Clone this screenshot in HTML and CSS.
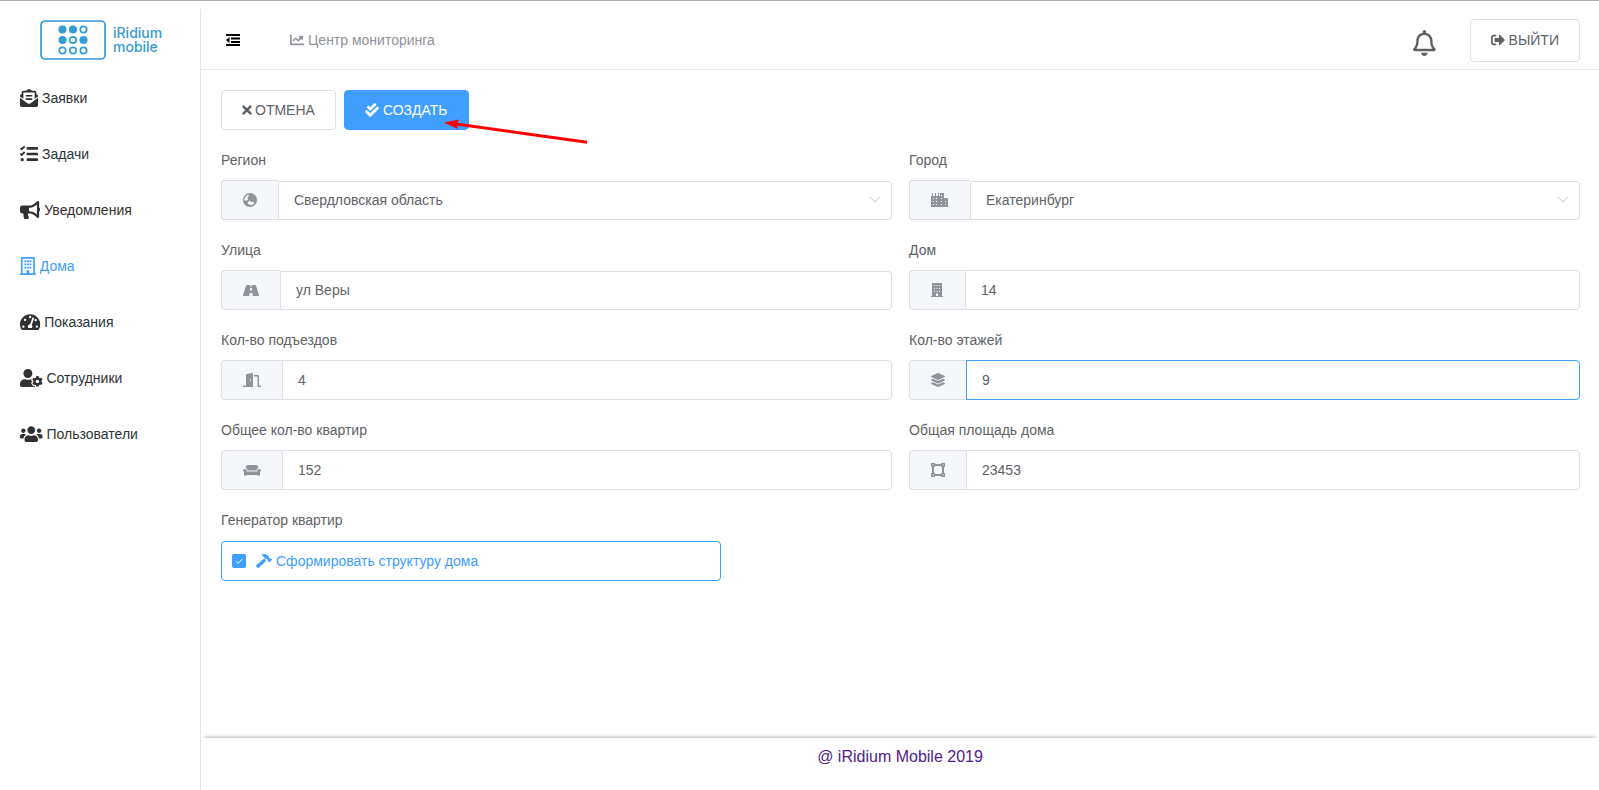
FILE: index.html
```html
<!DOCTYPE html>
<html lang="ru">
<head>
<meta charset="utf-8">
<title>iRidium mobile</title>
<link rel="stylesheet" href="styles.css">
</head>
<body class="page">
<aside class="sidebar">
  <a class="logo" href="#">
    <svg class="logo-mark" viewBox="0 0 66 40" aria-hidden="true">
      <rect class="logo-frame" x="1" y="1" width="64" height="38" rx="4"/>
      <g class="logo-dots">
        <circle class="dot-full" cx="22.500" cy="9.500" r="3.200"/><circle class="dot-full" cx="33" cy="9.500" r="3.200"/><circle cx="43.500" cy="9.500" r="3.200"/>
        <circle class="dot-full" cx="22.500" cy="20" r="3.200"/><circle cx="33" cy="20" r="3.200"/><circle class="dot-full" cx="43.500" cy="20" r="3.200"/>
        <circle cx="22.500" cy="30.500" r="3.200"/><circle cx="33" cy="30.500" r="3.200"/><circle cx="43.500" cy="30.500" r="3.200"/>
      </g>
    </svg>
    <span class="logo-text">iRidium<br>mobile</span>
  </a>
  <nav class="menu">
    <a class="menu-item" href="#"><svg viewBox="0 0 512 512"><path d="M176 216h160c8.840 0 16-7.160 16-16v-16c0-8.840-7.160-16-16-16H176c-8.840 0-16 7.160-16 16v16c0 8.840 7.160 16 16 16zm-16 80c0 8.840 7.160 16 16 16h160c8.840 0 16-7.160 16-16v-16c0-8.840-7.160-16-16-16H176c-8.840 0-16 7.160-16 16v16zm96 121.130c-16.420 0-32.840-5.060-46.860-15.190L0 250.860V464c0 26.510 21.490 48 48 48h416c26.510 0 48-21.490 48-48V250.860L302.860 401.940c-14.020 10.120-30.440 15.190-46.860 15.190zm237.610-254.180c-8.850-6.940-17.240-13.470-29.610-22.810V96c0-26.510-21.490-48-48-48h-77.550c-3.040-2.200-5.870-4.260-9.040-6.560C312.600 29.170 279.200-.35 256 0c-23.200-.35-56.590 29.170-73.410 41.440-3.170 2.300-6 4.360-9.040 6.560H96c-26.510 0-48 21.490-48 48v44.140c-12.370 9.330-20.760 15.870-29.610 22.810A47.995 47.995 0 0 0 0 200.720v10.650l96 69.350V96h320v184.720l96-69.350v-10.650c0-14.740-6.780-28.670-18.390-37.770z"/></svg><span>Заявки</span></a>
    <a class="menu-item" href="#"><svg viewBox="0 0 512 512"><rect x="190" y="58" width="322" height="76" rx="18"/><rect x="190" y="218" width="322" height="76" rx="18"/><rect x="190" y="378" width="322" height="76" rx="18"/><circle cx="64" cy="416" r="46"/><path class="tick" d="M14 86l36 34 82-84M14 248l36 34 82-84"/></svg><span>Задачи</span></a>
    <a class="menu-item" href="#"><svg viewBox="0 0 576 512"><path d="M576 240c0-23.630-12.950-44.040-32-55.120V32.010C544 23.260 537.020 0 512 0c-7.120 0-14.190 2.380-19.980 7.020l-85.030 68.030C364.280 109.190 310.660 128 256 128H64c-35.350 0-64 28.650-64 64v96c0 35.350 28.650 64 64 64h33.700c-1.390 10.480-2.180 21.140-2.180 32 0 39.770 9.260 77.350 25.560 110.940 5.190 10.690 16.520 17.060 28.400 17.060h74.280c26.050 0 41.690-29.840 25.900-50.560-16.400-21.520-26.150-48.360-26.150-77.440 0-11.110 1.620-21.790 4.410-32H256c54.660 0 108.280 18.810 150.980 52.950l85.030 68.030a32.023 32.023 0 0 0 19.980 7.020c24.920 0 32-22.780 32-32V295.130C563.050 284.040 576 263.630 576 240zm-96 141.420l-33.050-26.440C392.950 311.780 325.120 288 256 288v-96c69.120 0 136.950-23.780 190.950-66.980L480 98.580v282.840z"/></svg><span>Уведомления</span></a>
    <a class="menu-item menu-item--active" href="#"><svg viewBox="0 0 448 512"><path fill-rule="evenodd" d="M24 24c0-13 11-24 24-24h352c13 0 24 11 24 24v440h12c7 0 12 5 12 12v36H0v-36c0-7 5-12 12-12h12zM72 48v415h112v-75c0-7 5-12 12-12h56c7 0 12 5 12 12v75h112V48zM126 92h54v54h-54zM268 92h54v54h-54zM197 92h54v54h-54zM126 184h54v54h-54zM268 184h54v54h-54zM197 184h54v54h-54zM126 276h54v54h-54zM268 276h54v54h-54zM197 276h54v54h-54z"/></svg><span>Дома</span></a>
    <a class="menu-item" href="#"><svg viewBox="0 0 576 512"><path fill-rule="evenodd" d="M288 32C129 32 0 161 0 320c0 53 14 102 39 145 6 10 16 15 27 15h444c11 0 21-5 27-15 25-43 39-92 39-145C576 161 447 32 288 32zM288 80a34 34 0 1 1 0 68 34 34 0 0 1 0-68zM96 352a34 34 0 1 1 0 68 34 34 0 0 1 0-68zM144 160a34 34 0 1 1 0 68 34 34 0 0 1 0-68zM480 352a34 34 0 1 1 0 68 34 34 0 0 1 0-68zM448 168a34 34 0 1 1 0 68 34 34 0 0 1 0-68zM356 126l46 15-67 200c12 12 17 27 17 43 0 18-5 30-14 40H238c-9-10-14-24-14-40 0-34 28-62 64-64z"/></svg><span>Показания</span></a>
    <a class="menu-item" href="#"><svg viewBox="0 0 640 512"><path d="M610.500 373.300c2.600-14.100 2.600-28.500 0-42.600l25.800-14.900c3-1.700 4.300-5.200 3.300-8.500-6.700-21.600-18.200-41.200-33.200-57.400-2.300-2.500-6-3.100-9-1.400l-25.800 14.900c-10.900-9.300-23.400-16.500-36.900-21.300v-29.800c0-3.400-2.400-6.400-5.700-7.100-22.300-5-45-4.800-66.200 0-3.300.7-5.700 3.700-5.700 7.100v29.800c-13.500 4.800-26 12-36.900 21.300l-25.800-14.900c-2.900-1.700-6.700-1.100-9 1.400-15 16.200-26.500 35.800-33.200 57.400-1 3.300.4 6.800 3.300 8.500l25.800 14.900c-2.600 14.100-2.600 28.500 0 42.600l-25.800 14.900c-3 1.700-4.300 5.200-3.300 8.500 6.700 21.600 18.200 41.100 33.200 57.400 2.300 2.500 6 3.100 9 1.400l25.800-14.900c10.900 9.300 23.400 16.500 36.900 21.300v29.800c0 3.400 2.400 6.400 5.700 7.100 22.300 5 45 4.800 66.200 0 3.300-.7 5.700-3.700 5.700-7.100v-29.800c13.500-4.800 26-12 36.900-21.300l25.800 14.900c2.900 1.700 6.700 1.100 9-1.400 15-16.200 26.500-35.800 33.200-57.400 1-3.300-.4-6.800-3.300-8.500l-25.800-14.900zM496 400.500c-26.800 0-48.500-21.800-48.500-48.500s21.800-48.500 48.500-48.500 48.500 21.800 48.500 48.500-21.700 48.500-48.500 48.500zM224 256c70.700 0 128-57.300 128-128S294.700 0 224 0 96 57.300 96 128s57.300 128 128 128zm201.200 226.500c-2.300-1.200-4.600-2.600-6.800-3.900l-7.900 4.600c-6 3.400-12.800 5.300-19.600 5.300-10.900 0-21.400-4.600-28.900-12.600-18.300-19.800-32.300-43.900-40.200-69.600-5.500-17.700 1.900-36.400 17.900-45.700l7.900-4.600c-.1-2.600-.1-5.200 0-7.800l-7.900-4.600c-16-9.200-23.400-28-17.900-45.700.9-2.900 2.200-5.800 3.200-8.700-3.800-.3-7.500-1.200-11.400-1.200h-16.700c-22.200 10.200-46.900 16-72.900 16s-50.600-5.800-72.900-16h-16.700C60.200 288 0 348.200 0 422.400V464c0 26.500 21.500 48 48 48h352c10.100 0 19.500-3.200 27.200-8.500-1.200-3.800-2-7.700-2-11.800v-9.200z"/></svg><span>Сотрудники</span></a>
    <a class="menu-item" href="#"><svg viewBox="0 0 640 512"><path d="M96 224c35.300 0 64-28.700 64-64s-28.700-64-64-64-64 28.700-64 64 28.700 64 64 64zm448 0c35.300 0 64-28.700 64-64s-28.700-64-64-64-64 28.700-64 64 28.700 64 64 64zm32 32h-64c-17.600 0-33.500 7.100-45.100 18.600 40.300 22.100 68.900 62 75.100 109.400h66c17.700 0 32-14.300 32-32v-32c0-35.300-28.700-64-64-64zm-256 0c61.900 0 112-50.100 112-112S381.900 32 320 32 208 82.100 208 144s50.100 112 112 112zm76.800 32h-8.300c-20.800 10-43.900 16-68.500 16s-47.600-6-68.500-16h-8.300C179.600 288 128 339.600 128 403.200V432c0 26.500 21.500 48 48 48h288c26.500 0 48-21.500 48-48v-28.800c0-63.600-51.600-115.200-115.200-115.200zm-223.700-13.400C161.500 263.100 145.600 256 128 256H64c-35.300 0-64 28.700-64 64v32c0 17.700 14.300 32 32 32h65.900c6.300-47.400 34.900-87.300 75.200-109.400z"/></svg><span>Пользователи</span></a>
  </nav>
</aside>

<div class="main">
  <header class="topbar">
    <button class="icon-button" type="button" aria-label="Свернуть меню"><svg class="icon icon--black" viewBox="0 0 14 14"><path d="M0 1h14v2H0zM5 4.600h9v2H5zM5 8h9v2H5zM0 11h14v2H0zM0 7l3.500-3v6z"/></svg></button>
    <a class="crumb" href="#"><svg class="icon" viewBox="0 0 512 512"><path d="M32 64c18 0 32 6 32 16v304h432c9 0 16 7 16 16v32c0 9-7 16-16 16H32c-18 0-32-14-32-32V80c0-10 14-16 32-16zM464 96c9 0 16 7 16 16v118c0 21-26 32-41 17l-32-32-84 83c-13 13-33 13-46 0l-69-68-80 80-40-40 97-98c13-13 33-13 46 0l69 68 62-62-33-33c-15-15-4-49 17-49z"/></svg><span>Центр мониторинга</span></a>
    <button class="bell" type="button" aria-label="Уведомления"><svg viewBox="0 0 448 512"><path d="M439.390 362.290c-19.320-20.760-55.470-51.990-55.470-154.290 0-77.700-54.480-139.900-127.940-155.160V32c0-17.670-14.320-32-31.980-32s-31.980 14.330-31.980 32v20.840C118.560 68.100 64.080 130.300 64.080 208c0 102.300-36.150 133.530-55.470 154.290-6 6.450-8.660 14.160-8.610 21.710.110 16.400 12.980 32 32.100 32h383.800c19.120 0 32-15.600 32.100-32 .050-7.550-2.610-15.270-8.610-21.710zM67.530 368c21.220-27.970 44.420-74.330 44.530-159.420 0-.2-.060-.380-.060-.580 0-61.860 50.140-112 112-112s112 50.140 112 112c0 .2-.060.380-.060.580.110 85.100 23.310 131.460 44.530 159.420H67.530zM224 512c35.320 0 63.970-28.650 63.970-64H160.030c0 35.350 28.650 64 63.970 64z"/></svg></button>
    <button class="button button--tall" type="button"><svg class="icon" viewBox="0 0 512 512"><path d="M497 273L329 441c-15 15-41 4.500-41-17v-96H152c-13.300 0-24-10.700-24-24v-96c0-13.300 10.700-24 24-24h136V88c0-21.400 25.900-32 41-17l168 168c9.300 9.400 9.300 24.600 0 34zM192 436v-40c0-6.600-5.400-12-12-12H96c-17.700 0-32-14.300-32-32V160c0-17.700 14.300-32 32-32h84c6.600 0 12-5.400 12-12V76c0-6.600-5.400-12-12-12H96c-53 0-96 43-96 96v192c0 53 43 96 96 96h84c6.600 0 12-5.400 12-12z"/></svg><span>ВЫЙТИ</span></button>
  </header>

  <form class="content">
    <div class="actions">
      <button class="button button--tight" type="button"><svg class="icon icon--narrow" viewBox="0 0 352 512"><path d="M242.720 256l100.070-100.070c12.280-12.280 12.280-32.190 0-44.480l-22.240-22.240c-12.280-12.280-32.190-12.280-44.480 0L176 189.280 75.930 89.210c-12.280-12.280-32.190-12.280-44.480 0L9.210 111.450c-12.280 12.280-12.280 32.190 0 44.480L109.280 256 9.210 356.070c-12.280 12.280-12.280 32.190 0 44.480l22.240 22.240c12.280 12.280 32.200 12.280 44.480 0L176 322.720l100.070 100.070c12.280 12.280 32.200 12.280 44.480 0l22.240-22.240c12.280-12.280 12.280-32.190 0-44.480L242.720 256z"/></svg><span>ОТМЕНА</span></button>
      <div class="create">
        <button class="button button--primary" type="button"><svg class="icon" viewBox="0 0 512 512"><path d="M505 174.800l-39.600-39.600c-9.400-9.400-24.600-9.400-33.900 0L192 374.700 80.600 263.200c-9.400-9.400-24.600-9.400-33.900 0L7 302.900c-9.400 9.400-9.400 24.600 0 34L175 505c9.400 9.400 24.600 9.400 33.900 0l296-296.200c9.400-9.500 9.400-24.700.1-34zm-324.300 106c6.200 6.300 16.400 6.300 22.600 0l208-208.200c6.200-6.300 6.200-16.400 0-22.600L366.100 4.700c-6.200-6.300-16.400-6.300-22.600 0L192 156.200l-55.400-55.500c-6.200-6.300-16.400-6.300-22.600 0L68.700 146c-6.200 6.300-6.200 16.400 0 22.600l112 112.200z"/></svg><span>СОЗДАТЬ</span></button>
        <svg class="pointer" viewBox="0 0 144 24" aria-hidden="true"><path class="pointer-line" d="M12 3L143 21.200"/><path class="pointer-head" d="M0 1.500L15 -1.500 12.500 3.500 14 8z"/></svg>
      </div>
    </div>

    <div class="fields">
      <div class="field">
        <label for="region">Регион</label>
        <div class="group">
          <span class="prepend"><svg class="icon" viewBox="0 0 14 14"><path fill-rule="evenodd" d="M7 0a7 7 0 1 1 0 14A7 7 0 0 1 7 0zM1.500 5.500Q2.500 2.500 5.500 1.500L6 2.800 4.600 4.500 5.200 6.200 3.500 7.800 1.300 7.300zM5 9.300L6.800 7.400 8 9l2.600-.2L11.200 10.800 8.200 12.300 4.800 10.800z"/></svg></span>
          <div class="select-wrap">
            <select id="region" class="control control--short"><option>Свердловская область</option></select>
            <svg class="chevron" viewBox="0 0 12 7"><path d="M1 1l5 5 5-5"/></svg>
          </div>
        </div>
      </div>
      <div class="field">
        <label for="city">Город</label>
        <div class="group">
          <span class="prepend"><svg class="icon icon--wide" viewBox="0 0 18 14"><path fill-rule="evenodd" d="M0 14V3h1V0h1v3h2V0h1v3h2V0h1v3h1V0h4v5h3q1 0 1 1v8zM2 5v1h1V5zM5 5v1h1V5zM2 8v1h1V8zM5 8v1h1V8zM2 11v1h1v-1zM5 11v1h1v-1zM10 2v1h1V2zM10 5v1h1V5zM10 8v1h1V8zM10 11v1h1v-1zM14 8v1h1V8zM14 11v1h1v-1z"/></svg></span>
          <div class="select-wrap">
            <select id="city" class="control control--short"><option>Екатеринбург</option></select>
            <svg class="chevron" viewBox="0 0 12 7"><path d="M1 1l5 5 5-5"/></svg>
          </div>
        </div>
      </div>
      <div class="field">
        <label for="street">Улица</label>
        <div class="group">
          <span class="prepend"><svg class="icon icon--road" viewBox="0 0 16 14"><path fill-rule="evenodd" d="M4 2h3.300L7.200 3.500h1.600L8.700 2H12q.7 0 1 .7L16 12q.2 1-.8 1H9.700L9.400 10H6.600L6.300 13H.8Q-.2 13 0 12L3 2.700Q3.300 2 4 2zM7.100 5L6.900 7.500h2.200L8.900 5z"/></svg></span>
          <input id="street" class="control control--short" type="text" value="ул Веры">
        </div>
      </div>
      <div class="field">
        <label for="house">Дом</label>
        <div class="group">
          <span class="prepend"><svg class="icon icon--building" viewBox="0 0 13 14"><path fill-rule="evenodd" d="M0 14v-1h1V0h10v13h1v1zM3 2v1h1V2zM5.500 2v1h1V2zM8 2v1h1V2zM3 5v1h1V5zM5.500 5v1h1V5zM8 5v1h1V5zM3 8v1h1V8zM5.500 8v1h1V8zM8 8v1h1V8zM5 10.500V13h2v-2.500z"/></svg></span>
          <input id="house" class="control" type="text" value="14">
        </div>
      </div>
      <div class="field">
        <label for="entrances">Кол-во подъездов</label>
        <div class="group">
          <span class="prepend"><svg class="icon icon--wide" viewBox="0 0 18 14"><path fill-rule="evenodd" d="M0 12.500h3V2q0-.8.700-1L9 0q1 0 1 1v13H0zM7 6.200v1.600h1V6.200zM11 2h4q1 0 1 1v9.500h2V14h-3.500V3.500H11z"/></svg></span>
          <input id="entrances" class="control" type="text" value="4">
        </div>
      </div>
      <div class="field">
        <label for="floors">Кол-во этажей</label>
        <div class="group">
          <span class="prepend"><svg class="icon" viewBox="0 0 512 512"><path d="M12.410 148.020l232.940 105.670c6.800 3.090 14.490 3.090 21.290 0l232.940-105.670c16.550-7.510 16.550-32.520 0-40.030L266.650 2.310a25.607 25.607 0 0 0-21.290 0L12.410 107.980c-16.550 7.510-16.550 32.530 0 40.040zm487.180 88.280l-58.090-26.330-161.640 73.270c-7.560 3.430-15.590 5.170-23.860 5.170s-16.290-1.740-23.860-5.170L70.510 209.970l-58.100 26.330c-16.550 7.500-16.550 32.500 0 40l232.940 105.590c6.800 3.080 14.490 3.080 21.290 0L499.590 276.300c16.550-7.500 16.550-32.500 0-40zm0 127.800l-57.870-26.230-161.860 73.370c-7.560 3.430-15.590 5.170-23.860 5.170s-16.290-1.740-23.860-5.170L70.290 337.870 12.410 364.100c-16.550 7.500-16.550 32.500 0 40l232.940 105.590c6.800 3.080 14.490 3.080 21.290 0L499.590 404.100c16.550-7.500 16.550-32.500 0-40z"/></svg></span>
          <input id="floors" class="control control--focused" type="text" value="9">
        </div>
      </div>
      <div class="field">
        <label for="flats">Общее кол-во квартир</label>
        <div class="group">
          <span class="prepend"><svg class="icon icon--wide" viewBox="0 0 18 14"><path d="M2.700 4.800V4.300Q2.700 2 5.200 2h7.600q2.500 0 2.500 2.300v.5Q13.500 5.300 13.500 7.500H4.500Q4.500 5.300 2.700 4.800zM0 7.300Q.2 5.700 2 5.700q1.800.1 1.800 2.800h10.400q0-2.700 1.800-2.800 1.800 0 2 1.600 0 1-1 1.700V12q0 .7-.7.700H14.500V12h-11v.7H1.700Q1 12.700 1 12V9Q0 8.300 0 7.300z"/></svg></span>
          <input id="flats" class="control" type="text" value="152">
        </div>
      </div>
      <div class="field">
        <label for="area">Общая площадь дома</label>
        <div class="group">
          <span class="prepend"><svg class="icon" viewBox="0 0 14 14"><path fill-rule="evenodd" d="M0 0h4v1h6V0h4v4h-1v6h1v4h-4v-1H4v1H0v-4h1V4H0zM4 3v1H3v6h1v1h6v-1h1V4h-1V3zM1.500 1.500v1h1v-1zM11.500 1.500v1h1v-1zM1.500 11.500v1h1v-1zM11.500 11.500v1h1v-1z"/></svg></span>
          <input id="area" class="control" type="text" value="23453">
        </div>
      </div>
      <div class="field">
        <span class="field-title">Генератор квартир</span>
        <label class="generator">
          <span class="checkbox"><input class="checkbox-input" type="checkbox" checked><svg class="checkbox-tick" viewBox="0 0 14 14"><path d="M4 7.300l2.200 2.200L10.200 5"/></svg></span>
          <svg class="icon icon--road" viewBox="0 0 16 14"><path d="M5.500.6Q9-.9 12 1.600q1 1 .8 2.400l.9.500.8-.4L16 5.700 13.200 8.600 11.700 7l.2-.9-1.200-1.200-1.400-.1zM8.200 4.600l2.100 2.100-7.200 6.800q-.8.800-1.700 0L.5 12.700q-.8-.8 0-1.600z"/></svg>
          <span>Сформировать структуру дома</span>
        </label>
      </div>
    </div>
  </form>

  <footer class="footer"><a href="#">@ iRidium Mobile 2019</a></footer>
</div>
</body>
</html>
```
FILE: styles.css
```css
* {
  box-sizing: border-box;
}

.page {
  display: flex;
  min-height: 100vh;
  margin: 0;
  padding-top: 8px;
  border-top: 1px solid #b0b0b0;
  background: #fff;
  color: #606266;
  font: 14px/20px "Liberation Sans", Arial, sans-serif;
}

a {
  text-decoration: none;
}

svg {
  display: block;
  flex: none;
  fill: currentColor;
}

.sidebar {
  flex: none;
  width: 201px;
  border-right: 1px solid #e6e6e6;
}

.logo {
  display: flex;
  align-items: center;
  gap: 7px;
  height: 61px;
  padding-left: 40px;
  color: #379bd4;
}

.logo-mark {
  width: 66px;
  height: 40px;
}

.logo-frame,
.logo-dots {
  fill: none;
  stroke: currentColor;
  stroke-width: 1.7;
}

.dot-full {
  fill: currentColor;
}

.logo-text {
  font: 500 14px/14px Inter, "Liberation Sans", sans-serif;
}

.menu-item {
  display: flex;
  align-items: center;
  gap: 4px;
  height: 56px;
  padding-left: 20px;
  color: #303133;
}

.menu-item svg {
  height: 18px;
}

.menu-item--active {
  color: #409eff;
}

.tick {
  fill: none;
  stroke: currentColor;
  stroke-width: 50;
}

.main {
  display: flex;
  flex: 1;
  flex-direction: column;
  min-width: 0;
}

.topbar {
  display: flex;
  align-items: center;
  height: 61px;
  padding: 2px 19px 0 20px;
  border-bottom: 1px solid #e6e6e6;
}

.icon {
  width: 14px;
  height: 14px;
}

.icon--narrow {
  width: 10px;
}

.icon--building {
  width: 13px;
}

.icon--road {
  width: 16px;
}

.icon--wide {
  width: 18px;
}

.icon--black {
  color: #000;
}

.icon-button,
.bell {
  padding: 5px;
  border: 0;
  background: none;
  color: #606266;
}

.bell {
  margin: 6px 29px 0 auto;
}

.bell svg {
  height: 26px;
}

.crumb {
  display: flex;
  align-items: center;
  gap: 4px;
  margin-left: 45px;
  color: #909399;
}

.button {
  display: flex;
  align-items: center;
  gap: 4px;
  height: 40px;
  padding: 0 20px;
  border: 1px solid #dcdfe6;
  border-radius: 4px;
  background: #fff;
  color: #606266;
  font: inherit;
}

.button--tight {
  gap: 3px;
}

.button--tall {
  height: 43px;
}

.button--primary {
  border-color: #409eff;
  background: #409eff;
  color: #fff;
}

.content {
  flex: 1;
  padding: 20px 19px 20px 20px;
}

.actions {
  display: flex;
  gap: 8px;
}

.create {
  position: relative;
}

.pointer {
  position: absolute;
  top: 31px;
  left: 100px;
  width: 144px;
  height: 24px;
  overflow: visible;
  pointer-events: none;
}

.pointer-line {
  fill: none;
  stroke: #f00;
  stroke-width: 3;
}

.pointer-head {
  fill: #f00;
}

.fields {
  display: grid;
  grid-template-columns: 1fr 1fr;
  gap: 10px 17px;
  margin-top: 10px;
}

.field {
  display: flex;
  flex-direction: column;
  min-width: 0;
}

.field > label:not(.generator),
.field-title {
  line-height: 40px;
}

.group {
  display: flex;
  align-items: flex-end;
  height: 40px;
}

.prepend {
  display: flex;
  align-items: center;
  height: 40px;
  padding: 0 21px;
  border: 1px solid #dcdfe6;
  border-right: 0;
  border-radius: 4px 0 0 4px;
  background: #f5f7fa;
  color: #909399;
}

.control {
  flex: 1;
  width: 100%;
  min-width: 0;
  height: 40px;
  padding: 0 15px;
  border: 1px solid #dcdfe6;
  border-radius: 0 4px 4px 0;
  outline: 0;
  background: #fff;
  color: #606266;
  font: inherit;
  appearance: none;
}

.control--short {
  height: 39px;
  padding-bottom: 2px;
}

.control--focused {
  border-color: #409eff;
}

.select-wrap {
  position: relative;
  display: flex;
  flex: 1;
}

.chevron {
  position: absolute;
  top: 15px;
  right: 11px;
  width: 12px;
  height: 7px;
  fill: none;
  stroke: #c0c4cc;
  pointer-events: none;
}

.generator {
  display: flex;
  align-items: center;
  gap: 4px;
  max-width: 500px;
  height: 40px;
  margin-top: 1px;
  padding: 0 10px;
  border: 1px solid #409eff;
  border-radius: 4px;
  color: #409eff;
}

.checkbox {
  display: grid;
  margin-right: 6px;
}

.checkbox-input,
.checkbox-tick {
  grid-area: 1 / 1;
  width: 14px;
  height: 14px;
  margin: 0;
}

.checkbox-input {
  border-radius: 2px;
  background: #409eff;
  appearance: none;
}

.checkbox-tick {
  fill: none;
  stroke: #fff;
  pointer-events: none;
}

.footer {
  height: 52px;
  padding-top: 9px;
  box-shadow: 0 -4px 4px -4px #888;
  font-size: 16px;
  text-align: center;
}

.footer a {
  color: #551a8b;
}
```
